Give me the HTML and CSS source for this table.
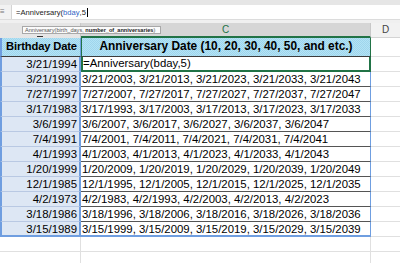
FILE: index.html
```html
<!DOCTYPE html>
<html>
<head>
<meta charset="utf-8">
<link rel="stylesheet" href="styles.css">
</head>
<body>
<div class="sheet">
  <div class="top-strip"></div>
  <div class="formula-bar">
    <div class="fx-end">&#8801;</div>
    <div class="formula-input">=Anniversary(<span class="ref">bday</span>,5<span class="caret"></span></div>
  </div>
  <div class="gap-strip"></div>
  <div class="col-headers">
    <div class="colh colh-b"><span class="b-mark"></span></div>
    <div class="colh colh-c">C</div>
    <div class="colh colh-d">D</div>
    <div class="tooltip">Anniversary(birth_days, <b>number_of_anniversaries</b>)</div>
  </div>
  <div class="row head-row">
    <div class="cell hb">Birthday Date</div>
    <div class="cell hc">Anniversary Date (10, 20, 30, 40, 50, and etc.)</div>
    <div class="cell hd"></div>
  </div>
  <div class="row data-row first">
    <div class="cell b">3/21/1994</div>
    <div class="cell c edit">=Anniversary(bday,5)</div>
    <div class="cell d"></div>
  </div>
  <div class="row data-row">
    <div class="cell b">3/21/1993</div>
    <div class="cell c">3/21/2003, 3/21/2013, 3/21/2023, 3/21/2033, 3/21/2043</div>
    <div class="cell d"></div>
  </div>
  <div class="row data-row">
    <div class="cell b">7/27/1997</div>
    <div class="cell c">7/27/2007, 7/27/2017, 7/27/2027, 7/27/2037, 7/27/2047</div>
    <div class="cell d"></div>
  </div>
  <div class="row data-row">
    <div class="cell b">3/17/1983</div>
    <div class="cell c">3/17/1993, 3/17/2003, 3/17/2013, 3/17/2023, 3/17/2033</div>
    <div class="cell d"></div>
  </div>
  <div class="row data-row">
    <div class="cell b">3/6/1997</div>
    <div class="cell c">3/6/2007, 3/6/2017, 3/6/2027, 3/6/2037, 3/6/2047</div>
    <div class="cell d"></div>
  </div>
  <div class="row data-row">
    <div class="cell b">7/4/1991</div>
    <div class="cell c">7/4/2001, 7/4/2011, 7/4/2021, 7/4/2031, 7/4/2041</div>
    <div class="cell d"></div>
  </div>
  <div class="row data-row">
    <div class="cell b">4/1/1993</div>
    <div class="cell c">4/1/2003, 4/1/2013, 4/1/2023, 4/1/2033, 4/1/2043</div>
    <div class="cell d"></div>
  </div>
  <div class="row data-row">
    <div class="cell b">1/20/1999</div>
    <div class="cell c">1/20/2009, 1/20/2019, 1/20/2029, 1/20/2039, 1/20/2049</div>
    <div class="cell d"></div>
  </div>
  <div class="row data-row">
    <div class="cell b">12/1/1985</div>
    <div class="cell c">12/1/1995, 12/1/2005, 12/1/2015, 12/1/2025, 12/1/2035</div>
    <div class="cell d"></div>
  </div>
  <div class="row data-row">
    <div class="cell b">4/2/1973</div>
    <div class="cell c">4/2/1983, 4/2/1993, 4/2/2003, 4/2/2013, 4/2/2023</div>
    <div class="cell d"></div>
  </div>
  <div class="row data-row">
    <div class="cell b">3/18/1986</div>
    <div class="cell c">3/18/1996, 3/18/2006, 3/18/2016, 3/18/2026, 3/18/2036</div>
    <div class="cell d"></div>
  </div>
  <div class="row data-row last">
    <div class="cell b">3/15/1989</div>
    <div class="cell c">3/15/1999, 3/15/2009, 3/15/2019, 3/15/2029, 3/15/2039</div>
    <div class="cell d"></div>
  </div>
  <div class="row empty-row">
    <div class="cell eb"></div>
    <div class="cell ec"></div>
    <div class="cell ed"></div>
  </div>
  <div class="row empty-row">
    <div class="cell eb"></div>
    <div class="cell ec"></div>
    <div class="cell ed"></div>
  </div>
</div>
</body>
</html>
```

FILE: styles.css
```css
* { box-sizing: border-box; }
html, body { margin: 0; padding: 0; background: #fff; }
body { width: 400px; height: 263px; overflow: hidden; font-family: "Liberation Sans", Arial, sans-serif; color: #000; }
.sheet { width: 400px; display: flex; flex-direction: column; }

.top-strip { height: 5px; background: #e6e6e6; }
.formula-bar { height: 14px; display: flex; align-items: center; background: #fff; }
.fx-end { width: 12px; height: 14px; background: #f2f2f2; color: #777; font-size: 8px; line-height: 14px; border-right: 1px solid #d4d4d4; }
.formula-input { padding-left: 4px; font-size: 7.6px; color: #222; display: flex; align-items: center; }
.formula-input .ref { color: #2f64c4; }
.caret { display: inline-block; width: 1px; height: 9px; background: #000; margin-left: 1px; }
.gap-strip { height: 4px; background: #f0f0f0; border-top: 1px solid #dcdcdc; }

.col-headers { height: 14px; display: grid; grid-template-columns: 81px 290px 1fr; position: relative; }
.colh { font-size: 10px; line-height: 14px; text-align: center; color: #444; border-right: 1px solid #c8c8c8; }
.colh-b { background: #e6e6e6; position: relative; }
.colh-c { background: #d6d6d6; color: #217346; border-bottom: 2px solid #217346; line-height: 13px; }
.colh-d { background: #f2f2f2; border-right: none; border-bottom: 1px solid #d4d4d4; }
.b-mark { position: absolute; left: 37px; bottom: 1px; width: 6px; height: 1px; background: #333; }
.tooltip { position: absolute; left: 22px; top: 3px; width: 139px; height: 8px; background: #fbfbfb; border: 1px solid #a8a8a8; font-size: 5.6px; line-height: 6px; color: #555; padding-left: 2px; white-space: nowrap; overflow: hidden; }
.tooltip b { color: #222; }

.row { display: grid; grid-template-columns: 81px 290px 1fr; }
.cell { white-space: nowrap; overflow: hidden; }

.head-row { height: 20px; }
.hb, .hc { background-color: #a8dcf1; background-image: repeating-conic-gradient(#9fd5ec 0 25%, #b3e3f5 0 50%); background-size: 2px 2px; font-weight: bold; line-height: 19px; border-bottom: 1px solid #3c3c3c; }
.hb { font-size: 11.2px; letter-spacing: -0.15px; text-align: center; padding-left: 1px; border-left: 2px solid #6f9ee0; border-right: 1px solid #6f9ee0; }
.hc { font-size: 11.9px; text-align: center; border-left: 1px solid #217346; border-right: 1px solid #217346; }
.hd { border-bottom: 1px solid #e0e0e0; }

.data-row { height: 15px; }
.data-row .cell { font-size: 11.4px; line-height: 14px; }
.b { background: #dde7f4; text-align: right; padding-right: 2px; border-left: 2px solid #6f9ee0; border-right: 2px solid #6f9ee0; border-bottom: 1px solid #b9c9e3; }
.c { padding-left: 1px; border-bottom: 1px solid #555; border-right: 1px solid #6f9ee0; }
.d { border-bottom: 1px solid #e0e0e0; }
.c.edit { border: 2px solid #217346; border-top: none; padding-left: 0; line-height: 13px; }
.last .b { border-bottom: 2px solid #6f9ee0; }
.last .c { border-bottom: 2px solid #6f9ee0; }

.empty-row { height: 15px; }
.eb { border-right: 1px solid #e0e0e0; border-bottom: 1px solid #e0e0e0; }
.ec { border-right: 1px solid #e0e0e0; border-bottom: 1px solid #e0e0e0; }
.ed { border-bottom: 1px solid #e0e0e0; }
```
